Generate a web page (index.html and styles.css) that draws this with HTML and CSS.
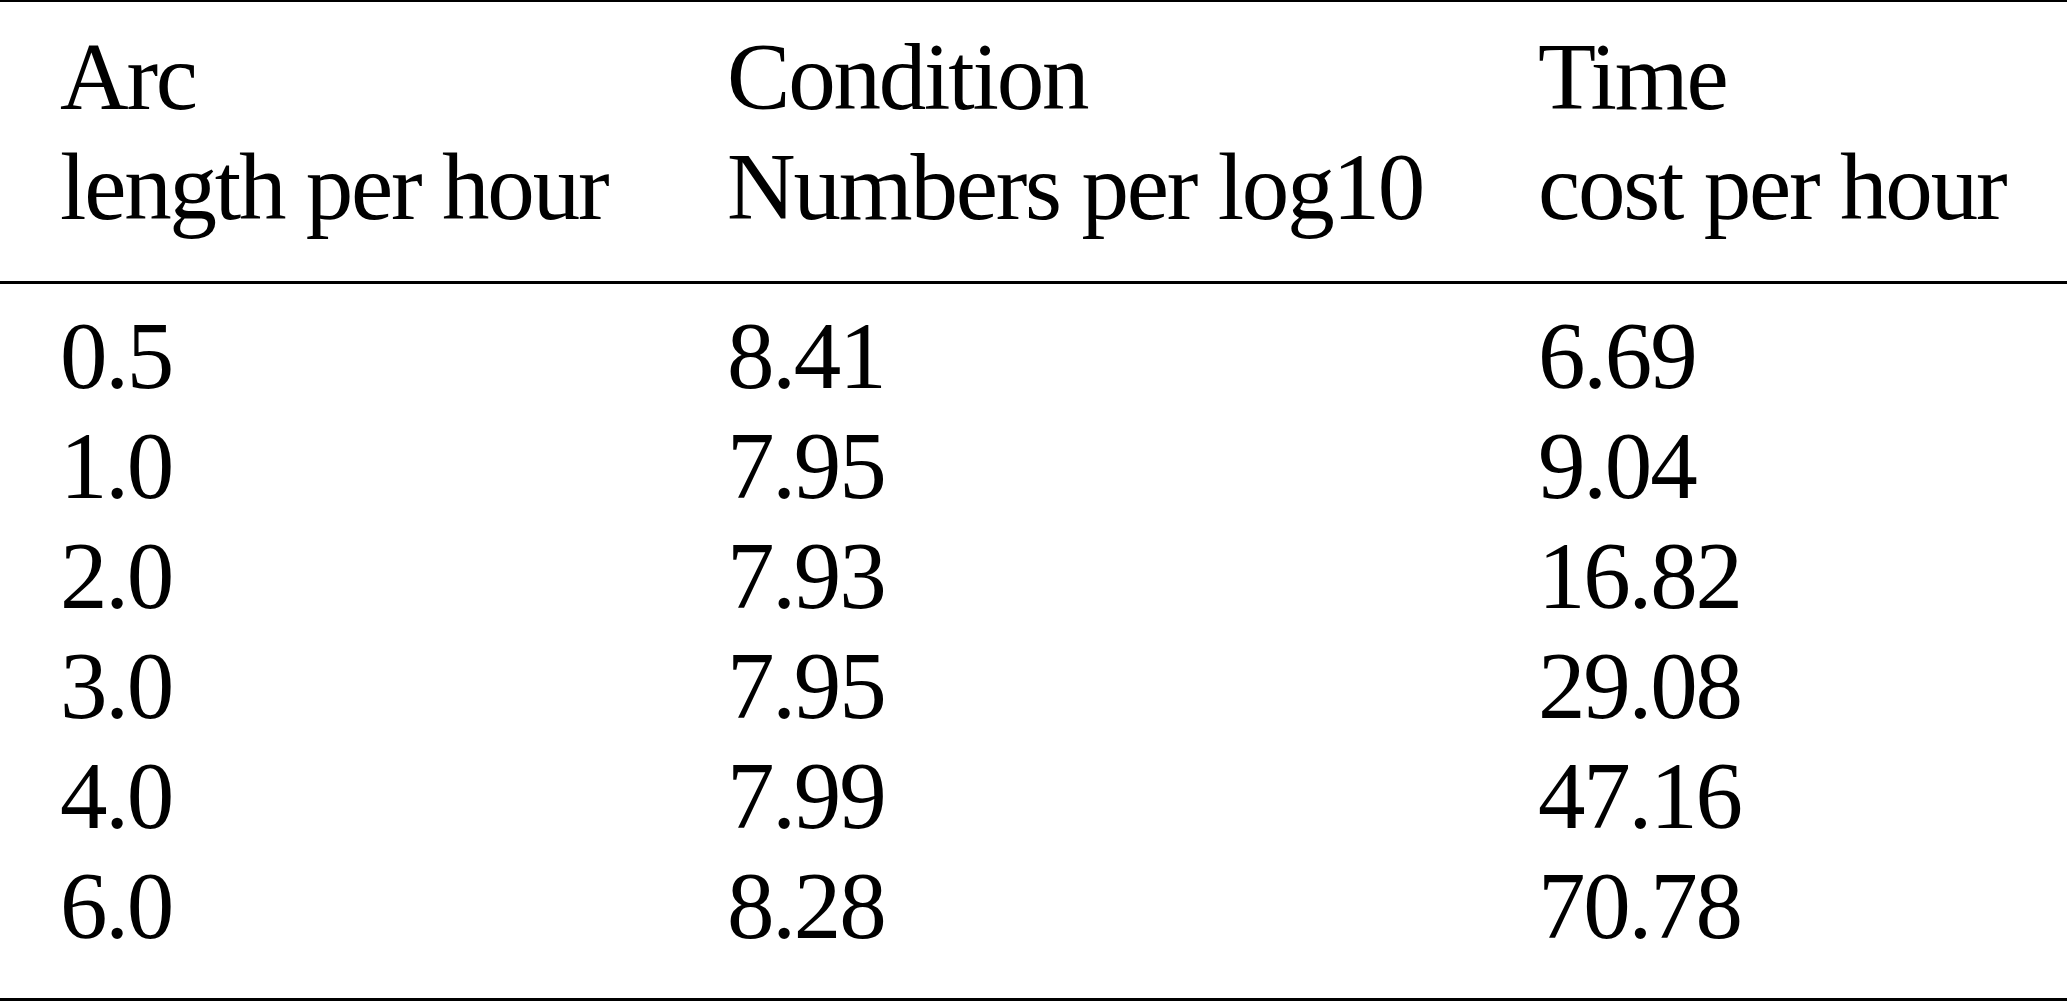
FILE: index.html
```html
<!DOCTYPE html>
<html>
<head>
    <meta charset="utf-8">
    <title>Arc length, condition numbers and time cost</title>
    <link rel="stylesheet" href="styles.css">
</head>
<body>
    <table class="results">
        <colgroup>
            <col class="col-arc">
            <col class="col-cond">
            <col class="col-time">
        </colgroup>
        <thead>
            <tr>
                <th>Arc<br>length per hour</th>
                <th>Condition<br>Numbers per log10</th>
                <th>Time<br>cost per hour</th>
            </tr>
        </thead>
        <tbody>
            <tr class="first">
                <td>0.5</td>
                <td>8.41</td>
                <td>6.69</td>
            </tr>
            <tr>
                <td>1.0</td>
                <td>7.95</td>
                <td>9.04</td>
            </tr>
            <tr>
                <td>2.0</td>
                <td>7.93</td>
                <td>16.82</td>
            </tr>
            <tr>
                <td>3.0</td>
                <td>7.95</td>
                <td>29.08</td>
            </tr>
            <tr>
                <td>4.0</td>
                <td>7.99</td>
                <td>47.16</td>
            </tr>
            <tr class="last">
                <td>6.0</td>
                <td>8.28</td>
                <td>70.78</td>
            </tr>
        </tbody>
    </table>
</body>
</html>
```

FILE: styles.css
```css
body {
    margin: 0;
    background: #fff;
    color: #000;
    font-family: "Liberation Serif", "Times New Roman", serif;
}
.results {
    width: 100%;
    table-layout: fixed;
    border-collapse: separate;
    border-spacing: 0;
    border-top: 2px solid #000;
    border-bottom: 3px solid #000;
    font-size: 95px;
    letter-spacing: -2.2px;
    line-height: 110px;
}
.col-arc {
    width: 727px;
}
.col-cond {
    width: 811px;
}
.results th,
.results td {
    padding: 0;
    text-align: left;
    font-weight: normal;
    vertical-align: top;
    white-space: nowrap;
}
.results th {
    padding-top: 20px;
    padding-bottom: 39px;
    border-bottom: 3px solid #000;
}
.results th:first-child,
.results td:first-child {
    padding-left: 60px;
}
.results .first td {
    padding-top: 17px;
}
.results .last td {
    padding-bottom: 37px;
}
```
